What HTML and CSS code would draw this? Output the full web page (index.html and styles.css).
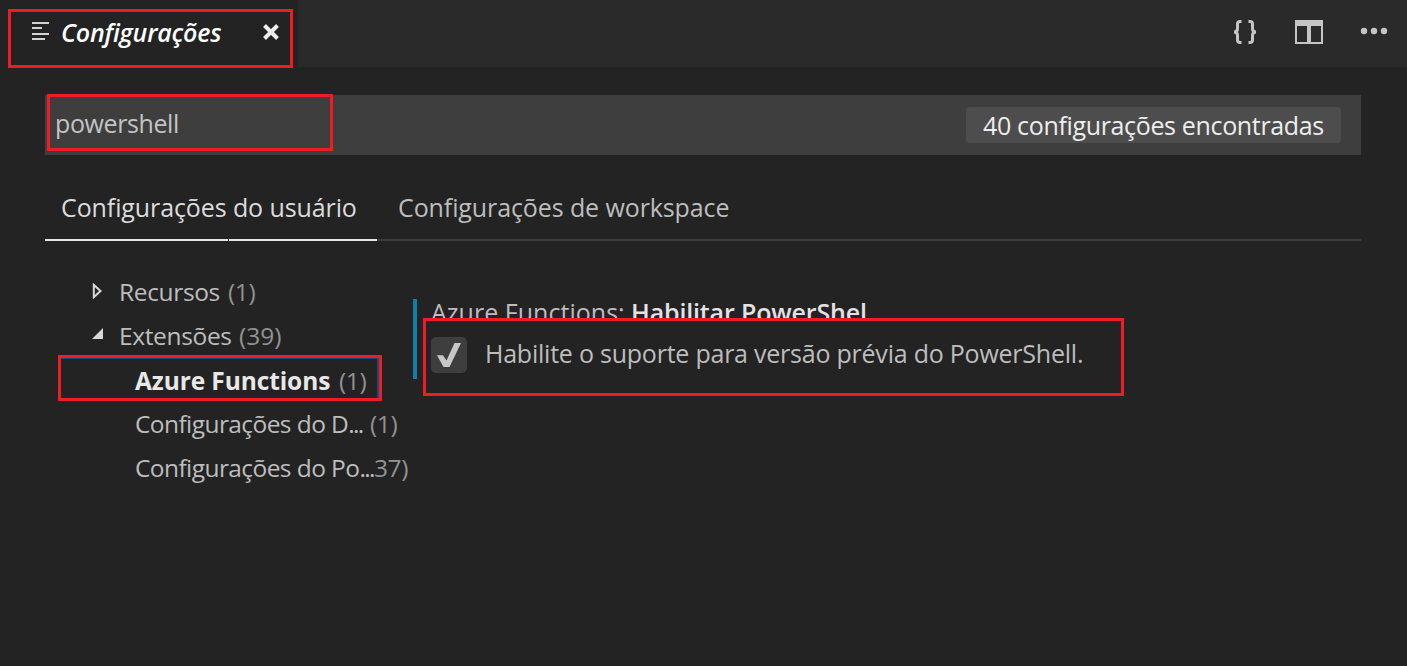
FILE: index.html
```
<!DOCTYPE html>
<html lang="pt-BR">
<head>
<meta charset="utf-8">
<title>Configurações</title>
<link rel="stylesheet" href="styles.css">
</head>
<body>
<header class="tabbar">
  <div class="tab">
    <svg class="tab-icon" width="17" height="19" viewBox="0 0 17 19" fill="#d4d4d4"><path d="M0 0h17v2H0zM0 5h10v2H0zM0 11h17v2H0zM0 16h13v2H0z"/></svg>
    <span class="tab-title">Configurações</span>
    <svg class="tab-close" width="16" height="16" viewBox="0 0 16 16"><path d="M1.500 1.500l13 13M14.500 1.500l-13 13" stroke="#ececec" stroke-width="4"/></svg>
  </div>
  <div class="actions">
    <svg width="24" height="24" viewBox="0 0 24 24" fill="none" stroke="#c5c5c5" stroke-width="3"><path d="M8.500 1.500H7Q4.500 1.500 4.500 4V8.500Q4.500 12 1 12Q4.500 12 4.500 15.500V20Q4.500 22.500 7 22.500H8.500M15.500 1.500H17Q19.500 1.500 19.500 4V8.500Q19.500 12 23 12Q19.500 12 19.500 15.500V20Q19.500 22.500 17 22.500H15.500"/></svg>
    <svg width="28" height="24" viewBox="0 0 28 24"><path fill="#c5c5c5" fill-rule="evenodd" d="M0 0h28v24H0zM2 6v16h10V6zM16 6v16h10V6z"/></svg>
    <svg class="more" width="28" height="8" viewBox="0 0 28 8" fill="#c5c5c5"><circle cx="4" cy="4" r="3.200"/><circle cx="14" cy="4" r="3.200"/><circle cx="24" cy="4" r="3.200"/></svg>
  </div>
</header>
<main class="editor">
  <div class="search">
    <span class="query">powershell</span>
    <span class="badge">40 configurações encontradas</span>
  </div>
  <nav class="scopes">
    <div class="scope active">Configurações do usuário</div>
    <div class="scope">Configurações de workspace</div>
  </nav>
  <div class="body">
    <div class="tree">
      <div class="row"><svg class="twisty" width="10" height="16" viewBox="0 0 10 16"><path d="M1.300 1.800v12.400L8 8z" fill="none" stroke="#d8d8d8" stroke-width="2"/></svg><span class="label top">Recursos</span><span class="count">(1)</span></div>
      <div class="row"><svg class="twisty open" width="11" height="11" viewBox="0 0 11 11"><path d="M11 0v11H0z" fill="#d8d8d8"/></svg><span class="label top ext">Extensões</span><span class="count wide">(39)</span></div>
      <div class="row child bold"><span class="label selected">Azure Functions</span><span class="count">(1)</span></div>
      <div class="row child"><span class="label long">Configurações do D<span class="dots">...</span></span><span class="count">(1)</span></div>
      <div class="row child"><span class="label longest">Configurações do Po<span class="dots">...</span></span><span class="count">37)</span></div>
    </div>
    <section class="setting">
      <div class="setting-title"><span class="category">Azure Functions: </span><span class="name">Habilitar PowerShel</span></div>
      <div class="option">
        <span class="checkbox"><svg width="24" height="24" viewBox="0 0 24 24"><path d="M0 12.200H6L9.500 17.500L17.500 0H24L12.500 24H6.500Z" fill="#c8c8c8"/></svg></span>
        <span class="description">Habilite o suporte para versão prévia do PowerShell.</span>
      </div>
    </section>
  </div>
</main>
<div class="mark mark-tab"></div>
<div class="mark mark-search"></div>
<div class="mark mark-tree"></div>
<div class="mark mark-option"></div>
</body>
</html>
```

FILE: styles.css
```
* { box-sizing: border-box; }
body {
  margin: 0;
  height: 666px;
  overflow: hidden;
  background: #232323;
  color: #bdbdbd;
  font: 25px/34px "Open Sans", "Noto Sans", sans-serif;
  white-space: nowrap;
}
svg { display: block; flex: none; }
.tabbar { display: flex; justify-content: space-between; height: 67px; background: #2a2a2a; }
.tab { display: flex; align-items: center; width: 298px; padding: 0 19px 3px 32px; background: #232323; }
.tab-icon { margin: 0 12px 2px 0; }
.tab-title { width: 202px; color: #fff; font-style: italic; font-weight: 600; letter-spacing: -0.2px; }
.actions { display: flex; align-items: center; gap: 38px; padding: 0 19px 3px 0; }
.actions .more { margin: 0 0 2px -1px; }
.editor { padding: 28px 46px 0 45px; }
.search { display: flex; align-items: center; justify-content: space-between; height: 60px; padding: 0 20px 0 10px; background: #3e3e3e; }
.query { padding-bottom: 4px; color: #c4c4c4; letter-spacing: -0.4px; }
.badge { width: 375px; height: 36px; padding-left: 17px; border-radius: 4px; background: #4d4d4d; color: #eee; line-height: 36px; letter-spacing: -0.34px; }
.scopes { display: flex; height: 86px; padding-top: 35px; border-bottom: 2px solid #3c3c3c; }
.scope { height: 51px; padding-left: 21px; letter-spacing: -0.1px; }
.scope.active { width: 332px; padding-left: 16px; color: #dcdcdc; border: solid; border-width: 0 0 2px; border-image: linear-gradient(90deg, #e7e7e7 183px, #232323 183px, #232323 184px, #e7e7e7 184px) 2; }
.body { display: flex; padding-top: 29px; }
.tree { width: 368px; padding-left: 47px; font-size: 24.5px; letter-spacing: -0.35px; }
.row { display: flex; align-items: center; height: 44px; line-height: 44px; }
.child { padding-left: 43px; }
.bold { padding-top: 1px; }
.twisty { width: 11px; margin: 0 16px 2px 0; }
.twisty.open { margin-bottom: 5px; }
.label { flex: none; }
.top { width: 109px; }
.top.ext { width: 120px; }
.count { color: #929292; letter-spacing: -0.4px; }
.wide { letter-spacing: 0; }
.selected { width: 204px; color: #e8e8e8; font-weight: 700; letter-spacing: -0.1px; }
.long { width: 235px; letter-spacing: -0.58px; }
.longest { width: 239px; letter-spacing: -0.58px; }
.dots { letter-spacing: -1.7px; }
.setting { height: 80px; margin-top: 29px; padding-left: 14px; border-left: 4px solid #147fa6; }
.setting-title { height: 38px; margin-top: -4px; clip-path: inset(0 0 14px 0); }
.category { display: inline-block; width: 200px; letter-spacing: 0.03px; }
.name { color: #e2e2e2; font-weight: 600; letter-spacing: -0.15px; }
.option { display: flex; gap: 18px; margin-top: 4px; }
.checkbox { display: flex; width: 36px; height: 36px; align-items: center; justify-content: center; border-radius: 5px; background: #3e3e3e; }
.description { margin-top: -1px; letter-spacing: -0.23px; }
.mark { position: absolute; border: 3px solid #ee1c24; }
.mark-tab { left: 8px; top: 9px; width: 285px; height: 59px; }
.mark-search { left: 47px; top: 94px; width: 286px; height: 57px; }
.mark-tree { left: 58px; top: 355px; width: 324px; height: 46px; box-shadow: inset -2px 1px 0 #154d78; }
.mark-option { left: 423px; top: 318px; width: 701px; height: 78px; }
```
